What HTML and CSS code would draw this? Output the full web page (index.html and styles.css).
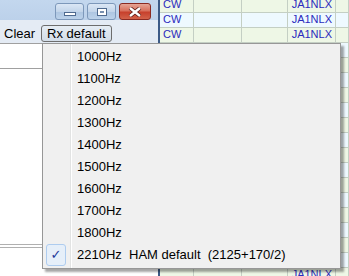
FILE: index.html
```html
<!DOCTYPE html>
<html lang="en">
<head>
  <meta charset="UTF-8" />
  <title>Rx default</title>
  <link rel="stylesheet" href="styles.css">
</head>
<body>
  <div class="app">
    <div class="left">
      <div class="titlebar">
        <span class="wbtn min"><i></i></span>
        <span class="wbtn max"><i></i></span>
        <span class="wbtn close">
          <svg width="14" height="10" viewBox="0 0 14 10"><path d="M2 1 L12 9 M12 1 L2 9" stroke="#5a1a14" stroke-width="4"/><path d="M2 1 L12 9 M12 1 L2 9" stroke="#fff" stroke-width="2.4"/></svg>
        </span>
      </div>
      <div class="toolbar">
        <span class="clear">Clear</span>
        <span class="rxbtn">Rx default</span>
      </div>
      <div class="pane">
        <div class="pane-head"></div>
        <div class="pane-body"></div>
        <div class="pane-foot"></div>
      </div>
    </div>

    <div class="grid">
      <div class="row g"><span>CW</span><span></span><span></span><span class="call">JA1NLX</span><span></span></div>
      <div class="row b"><span>CW</span><span></span><span></span><span class="call">JA1NLX</span><span></span></div>
      <div class="row g"><span>CW</span><span></span><span></span><span class="call">JA1NLX</span><span></span></div>
      <div class="row b"><span></span><span></span><span></span><span></span><span></span></div>
      <div class="row g"><span></span><span></span><span></span><span></span><span></span></div>
      <div class="row b"><span></span><span></span><span></span><span></span><span></span></div>
      <div class="row g"><span></span><span></span><span></span><span></span><span></span></div>
      <div class="row b"><span></span><span></span><span></span><span></span><span></span></div>
      <div class="row g"><span></span><span></span><span></span><span></span><span></span></div>
      <div class="row b"><span></span><span></span><span></span><span></span><span></span></div>
      <div class="row g"><span></span><span></span><span></span><span></span><span></span></div>
      <div class="row b"><span></span><span></span><span></span><span></span><span></span></div>
      <div class="row g"><span></span><span></span><span></span><span></span><span></span></div>
      <div class="row b"><span></span><span></span><span></span><span></span><span></span></div>
      <div class="row g"><span></span><span></span><span></span><span></span><span></span></div>
      <div class="row b"><span></span><span></span><span></span><span></span><span></span></div>
      <div class="row g"><span></span><span></span><span></span><span></span><span></span></div>
      <div class="row b"><span></span><span></span><span></span><span></span><span></span></div>
      <div class="row g"><span></span><span></span><span></span><span class="call">JA1NLX</span><span></span></div>
    </div>

    <ul class="menu">
      <li>1000Hz</li>
      <li>1100Hz</li>
      <li>1200Hz</li>
      <li>1300Hz</li>
      <li>1400Hz</li>
      <li>1500Hz</li>
      <li>1600Hz</li>
      <li>1700Hz</li>
      <li>1800Hz</li>
      <li class="checked"><span class="tick">&#10003;</span>2210Hz  HAM default  (2125+170/2)</li>
    </ul>
  </div>
</body>
</html>
```

FILE: styles.css
```css
body {
  margin: 0;
  font-family: "Liberation Sans", Arial, sans-serif;
  background: #fff;
  overflow: hidden;
}

.app {
  display: flex;
  width: 349px;
  height: 276px;
  position: relative;
  overflow: hidden;
}

.left {
  width: 158px;
  display: flex;
  flex-direction: column;
  border-right: 2px solid #3c5a86;
}

.titlebar {
  height: 20px;
  background: linear-gradient(#c3d7ee, #bcd1ea);
  display: flex;
  align-items: flex-start;
  padding: 3px 0 0 55px;
  box-sizing: border-box;
  gap: 3px;
}

.wbtn {
  height: 17px;
  box-sizing: border-box;
  border: 1px solid #7d98ba;
  border-radius: 3px;
  display: flex;
  align-items: center;
  justify-content: center;
  background: linear-gradient(#dbe7f5 0%, #c3d5ea 50%, #adc5e1 51%, #bcd2ea 100%);
}

.min { width: 29px; }
.min i {
  width: 12px;
  height: 4px;
  margin-top: 5px;
  background: #fff;
  border: 1px solid #4f6a8f;
  box-sizing: border-box;
}
.max { width: 29px; }
.max i {
  width: 10px;
  height: 8px;
  background: #fff;
  border: 1px solid #4f6a8f;
  box-shadow: inset 0 0 0 2px #fff, inset 0 0 0 3px #7890b0;
  box-sizing: border-box;
}
.close {
  width: 32px;
  border-color: #8a2a22;
  background: linear-gradient(#e5a596 0%, #d8705c 45%, #c7402c 55%, #d2624a 100%);
}

.toolbar {
  height: 23px;
  background: #e4ebf4;
  display: flex;
  align-items: center;
  gap: 6px;
  padding: 3px 0 0 4px;
  box-sizing: border-box;
  font-size: 13px;
  color: #000;
}

.rxbtn {
  height: 17px;
  line-height: 15px;
  padding: 0 5px;
  box-sizing: border-box;
  border: 1px solid #6d6d6d;
  border-radius: 3px;
  background: linear-gradient(#e6edf4, #d3dde8);
}

.pane {
  flex: 1;
  display: flex;
  flex-direction: column;
  border-top: 1px solid #a0a0a0;
}

.pane-head {
  height: 24px;
  border-bottom: 1px solid #a0a0a0;
}

.pane-body {
  height: 175px;
  border-bottom: 1px solid #b0b0b0;
}

.pane-foot {
  height: 2px;
  border-bottom: 1px solid #b0b0b0;
}

.grid {
  flex: 1;
  font-size: 11px;
  color: #2b2bbd;
  margin-top: -2px;
}

.row {
  display: grid;
  grid-template-columns: 34px 48px 46px 48px 1fr;
  height: 15px;
  border-bottom: 1px solid #c4cfc4;
  box-sizing: border-box;
}

.row span {
  border-right: 1px solid #c4cfc4;
  padding-left: 3px;
  line-height: 13px;
}

.row .call {
  text-align: right;
  padding-right: 3px;
}

.row.g { background: #eef7e6; }
.row.b { background: #eef9ff; }

.menu {
  position: absolute;
  left: 42px;
  top: 43px;
  width: 299px;
  margin: 0;
  padding: 2px;
  list-style: none;
  background: #f0f0f0 linear-gradient(90deg, transparent 27px, #e2e3e3 27px, #e2e3e3 28px, #fff 28px, #fff 29px, transparent 29px);
  border: 1px solid #979797;
  box-shadow: 3px 3px 2px rgba(0, 0, 0, 0.35);
  box-sizing: border-box;
  font-size: 13px;
  color: #000;
}

.menu li {
  height: 22px;
  line-height: 22px;
  padding-left: 32px;
  white-space: pre;
  position: relative;
}

.tick {
  position: absolute;
  left: 1px;
  top: 0;
  width: 18px;
  height: 20px;
  border: 1px solid #aeccef;
  border-radius: 3px;
  background: #e6eff9;
  color: #1c3a9a;
  font-family: "DejaVu Sans", sans-serif;
  font-size: 13px;
  line-height: 20px;
  text-align: center;
}
```
